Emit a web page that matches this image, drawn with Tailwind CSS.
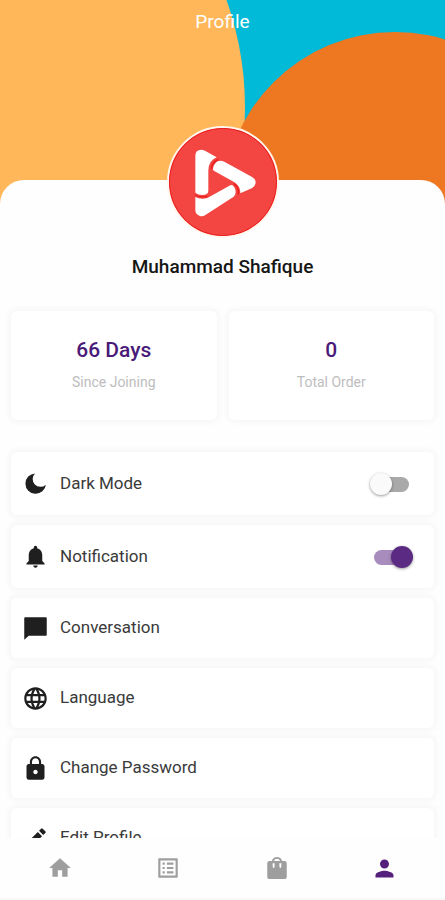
<!DOCTYPE html>
<html lang="en">
<head>
<meta charset="utf-8">
<meta name="viewport" content="width=device-width, initial-scale=1">
<title>Profile</title>
<script src="https://cdn.jsdelivr.net/npm/@tailwindcss/browser@4"></script>
</head>
<body class="bg-white font-[Roboto,sans-serif]">
<div class="flex h-screen flex-col overflow-hidden bg-[#fefefe]">
  <main class="min-h-0 flex-1 overflow-y-auto [scrollbar-width:none]">
    <header class="relative h-[204px] overflow-hidden bg-[#00bad7] pt-2">
      <svg class="absolute inset-0 h-full w-full" viewBox="0 0 445 204" preserveAspectRatio="none" aria-hidden="true">
        <circle cx="-73" cy="107" r="318" fill="#ffb759"/>
        <circle cx="395" cy="204" r="172" fill="#ee7822"/>
      </svg>
      <h1 class="relative text-center text-[19px] leading-7 text-white">Profile</h1>
    </header>

    <section class="relative -mt-6 rounded-t-3xl bg-[#fefefe] px-[11px] pt-[75px]">
      <svg class="absolute top-0.5 left-1/2 size-28 -translate-x-1/2 -translate-y-1/2 rounded-full border-2 border-[#fff6ee] bg-[#f34541]" viewBox="56 55 324 324" role="img" aria-label="Profile picture">
        <circle cx="218" cy="217" r="161" fill="#f34541" stroke="#ea1c1c" stroke-width="3"/>
        <g fill="#fff">
          <path d="M135 138Q135 120 153 120Q158 120 164 123L199 143Q174 153 174 183V243Q174 256 155 256Q143 256 135 249Z"/>
          <path d="M188 177C190 163 199 153 211 153Q216 153 222 156L304 201Q316 208 316 218Q316 229 304 236L270 251C270 233 262 223 247 215L193 185Q187 182 188 177Z"/>
          <path d="M135 262Q151 270 171 265L240 227Q245 224 249 229C259 241 257 255 250 261L164 317Q157 321 149 319Q135 315 135 302Z"/>
        </g>
        <path d="M135 256Q152 265 171 260M183 177Q186 158 203 149M251 222Q267 233 264 254" fill="none" stroke="#e91d1d" stroke-width="4"/>
      </svg>
      <h2 class="text-center text-[19px] leading-6 font-medium text-[#161616]">Muhammad Shafique</h2>

      <dl class="mt-8 grid grid-cols-2 gap-3">
        <div class="flex h-[109px] flex-col-reverse items-center justify-center gap-1 rounded-md bg-white shadow-[0_0_6px_2px_#f5f5f5]">
          <dt class="text-sm leading-7 text-[#bdbdbd]">Since Joining</dt>
          <dd class="text-[21px] leading-7 font-medium text-[#4a1a78]">66 Days</dd>
        </div>
        <div class="flex h-[109px] flex-col-reverse items-center justify-center gap-1 rounded-md bg-white shadow-[0_0_6px_2px_#f5f5f5]">
          <dt class="text-sm leading-7 text-[#bdbdbd]">Total Order</dt>
          <dd class="text-[21px] leading-7 font-medium text-[#4a1a78]">0</dd>
        </div>
      </dl>

      <div class="mt-8 flex flex-col gap-[10px] pb-4 text-[17px] text-[#3a3a3a]">
        <div class="flex h-[63px] items-center rounded-md bg-white pr-[21px] pl-[11px] shadow-[0_0_6px_2px_#f5f5f5]">
          <svg class="size-[27px] fill-[#1f1f1f]" viewBox="0 0 24 24" aria-hidden="true"><path d="M11.600 3A9.100 9.100 0 1 0 21.200 13 6.100 6.100 0 0 1 11.600 3Z"/></svg>
          <label for="dark" class="ml-[11px] flex-1">Dark Mode</label>
          <input id="dark" type="checkbox" role="switch" class="relative h-[22px] w-[43px] appearance-none before:absolute before:top-1 before:left-1 before:h-[15px] before:w-[35px] before:rounded-full before:bg-[#a9a9a9] after:absolute after:top-0 after:left-0 after:size-[22px] after:rounded-full after:bg-[#fafafa] after:shadow-[0_1px_3px_rgba(0,0,0,0.4)] checked:before:bg-[#a88cbe] checked:after:left-[21px] checked:after:bg-[#5b2a82]">
        </div>
        <div class="flex h-[63px] items-center rounded-md bg-white pr-[21px] pl-[11px] shadow-[0_0_6px_2px_#f5f5f5]">
          <svg class="size-[27px] fill-[#1f1f1f]" viewBox="0 0 24 24" aria-hidden="true"><path d="M12 22c1.100 0 2-.9 2-2h-4c0 1.100.9 2 2 2zm6-6v-5c0-3.070-1.630-5.640-4.500-6.320V4a1.500 1.500 0 0 0-3 0v.68C7.640 5.360 6 7.920 6 11v5l-2 2v1h16v-1z"/></svg>
          <label for="notify" class="ml-[11px] flex-1">Notification</label>
          <input id="notify" type="checkbox" role="switch" checked class="relative h-[22px] w-[43px] appearance-none before:absolute before:top-1 before:left-1 before:h-[15px] before:w-[35px] before:rounded-full before:bg-[#a9a9a9] after:absolute after:top-0 after:left-0 after:size-[22px] after:rounded-full after:bg-[#fafafa] after:shadow-[0_1px_3px_rgba(0,0,0,0.4)] checked:before:bg-[#a88cbe] checked:after:left-[21px] checked:after:bg-[#5b2a82]">
        </div>
        <a href="#conversation" class="flex h-[60px] items-center gap-[11px] rounded-md bg-white px-[11px] shadow-[0_0_6px_2px_#f5f5f5]">
          <svg class="size-[27px] fill-[#1f1f1f]" viewBox="0 0 24 24" aria-hidden="true"><path d="M21 2H3c-.6 0-1 .4-1 1v19l4-3.500h15c.6 0 1-.4 1-1V3c0-.6-.4-1-1-1z"/></svg>
          Conversation
        </a>
        <a href="#language" class="flex h-[60px] items-center gap-[11px] rounded-md bg-white px-[11px] shadow-[0_0_6px_2px_#f5f5f5]">
          <svg class="size-[27px] fill-[#1f1f1f]" viewBox="0 0 24 24" aria-hidden="true"><path d="M11.990 2C6.470 2 2 6.480 2 12s4.470 10 9.990 10C17.520 22 22 17.520 22 12S17.520 2 11.990 2zm6.930 6h-2.950a15.650 15.650 0 0 0-1.380-3.560A8.030 8.030 0 0 1 18.920 8zM12 4.040c.83 1.200 1.480 2.530 1.910 3.960h-3.820c.43-1.430 1.080-2.760 1.910-3.960zM4.260 14C4.100 13.360 4 12.690 4 12s.1-1.360.26-2h3.380c-.08.66-.14 1.320-.14 2s.06 1.340.14 2H4.260zm.82 2h2.950c.32 1.250.78 2.450 1.380 3.560A7.987 7.987 0 0 1 5.080 16zm2.950-8H5.080a7.987 7.987 0 0 1 4.330-3.560A15.650 15.650 0 0 0 8.030 8zM12 19.960c-.83-1.200-1.480-2.530-1.910-3.960h3.820c-.43 1.430-1.080 2.760-1.910 3.960zM14.340 14H9.660c-.09-.66-.16-1.320-.16-2s.07-1.350.16-2h4.680c.09.65.16 1.320.16 2s-.07 1.340-.16 2zm.25 5.560c.6-1.110 1.060-2.310 1.380-3.560h2.950a8.030 8.030 0 0 1-4.330 3.560zM16.360 14c.08-.66.14-1.320.14-2s-.06-1.340-.14-2h3.380c.16.64.26 1.310.26 2s-.1 1.360-.26 2h-3.380z"/></svg>
          Language
        </a>
        <a href="#password" class="flex h-[60px] items-center gap-[11px] rounded-md bg-white px-[11px] shadow-[0_0_6px_2px_#f5f5f5]">
          <svg class="size-[27px] fill-[#1f1f1f]" viewBox="0 0 24 24" aria-hidden="true"><path d="M18 8h-1V6c0-2.760-2.240-5-5-5S7 3.240 7 6v2H6c-1.100 0-2 .9-2 2v10c0 1.100.9 2 2 2h12c1.100 0 2-.9 2-2V10c0-1.100-.9-2-2-2zm-6 9c-1.100 0-2-.9-2-2s.9-2 2-2 2 .9 2 2-.9 2-2 2zm3.100-9H8.900V6c0-1.710 1.390-3.100 3.100-3.100s3.100 1.390 3.100 3.100v2z"/></svg>
          Change Password
        </a>
        <a href="#edit" class="flex h-[60px] items-center gap-[11px] rounded-md bg-white px-[11px] shadow-[0_0_6px_2px_#f5f5f5]">
          <svg class="size-[27px] fill-[#1f1f1f]" viewBox="0 0 24 24" aria-hidden="true"><path d="M3 17.250V21h3.750L17.810 9.940l-3.750-3.750L3 17.250zM20.710 7.040a1 1 0 0 0 0-1.410l-2.340-2.340a1 1 0 0 0-1.410 0l-1.830 1.830 3.750 3.750 1.830-1.830z"/></svg>
          Edit Profile
        </a>
      </div>
    </section>
  </main>

  <nav class="grid h-[62px] shrink-0 grid-cols-4 border-b-2 border-[#f8f8f8] bg-[#fefefe] px-1.5 text-[#9e9e9e]" aria-label="Main">
    <a href="#home" aria-label="Home" class="flex items-center justify-center"><svg class="size-[26px] fill-current" viewBox="0 0 24 24"><path d="M10 20v-6h4v6h5v-8h3L12 3 2 12h3v8z"/></svg></a>
    <a href="#orders" aria-label="Orders" class="flex items-center justify-center"><svg class="size-[26px] fill-current" viewBox="0 0 24 24"><path d="M19 5v14H5V5h14m1.100-2H3.900c-.5 0-.9.4-.9.9v16.200c0 .4.4.9.9.9h16.200c.4 0 .9-.5.9-.9V3.900c0-.5-.5-.9-.9-.9zM11 7h6v2h-6V7zm0 4h6v2h-6v-2zm0 4h6v2h-6zM7 7h2v2H7zm0 4h2v2H7zm0 4h2v2H7z"/></svg></a>
    <a href="#cart" aria-label="Shopping bag" class="flex items-center justify-center"><svg class="size-[26px] fill-current" viewBox="0 0 24 24"><path fill-rule="evenodd" d="M19 5.500h-2.300C16.200 3 14.300 1.800 12 1.800S7.800 3 7.300 5.500H5c-1.100 0-2 .9-2 2v12.700c0 1.100.9 2 2 2h14c1.100 0 2-.9 2-2V7.500c0-1.100-.9-2-2-2zM12 3.500c1.300 0 2.300.7 2.800 2H9.200C9.700 4.200 10.700 3.500 12 3.500zM8 7.500h1.800V10a.9 2 0 0 1-1.800 0zM14.200 7.500H16V10a.9 2 0 0 1-1.800 0z"/></svg></a>
    <a href="#profile" aria-label="Profile" aria-current="page" class="flex items-center justify-center text-[#54207c]"><svg class="size-[27px] fill-current" viewBox="0 0 24 24"><path d="M12 12c2.210 0 4-1.790 4-4s-1.790-4-4-4-4 1.790-4 4 1.790 4 4 4zm0 2c-2.670 0-8 1.340-8 4v2h16v-2c0-2.660-5.330-4-8-4z"/></svg></a>
  </nav>
</div>
</body>
</html>
